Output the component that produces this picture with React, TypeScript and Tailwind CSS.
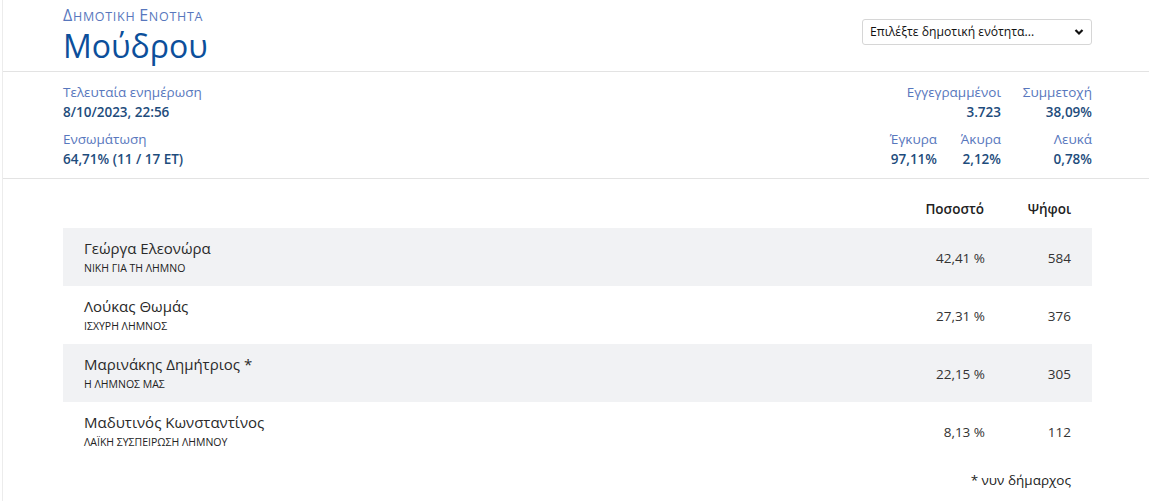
import React from "react";

const rows = [
  { name: "Γεώργα Ελεονώρα", party: "ΝΙΚΗ ΓΙΑ ΤΗ ΛΗΜΝΟ", pct: "42,41 %", votes: "584", shaded: true },
  { name: "Λούκας Θωμάς", party: "ΙΣΧΥΡΗ ΛΗΜΝΟΣ", pct: "27,31 %", votes: "376", shaded: false },
  { name: "Μαρινάκης Δημήτριος *", party: "Η ΛΗΜΝΟΣ ΜΑΣ", pct: "22,15 %", votes: "305", shaded: true },
  { name: "Μαδυτινός Κωνσταντίνος", party: "ΛΑΪΚΗ ΣΥΣΠΕΙΡΩΣΗ ΛΗΜΝΟΥ", pct: "8,13 %", votes: "112", shaded: false },
];

export default function App() {
  return (
    <div
      className="min-h-[501px] bg-white pl-[2px] text-[#333]"
      style={{ fontFamily: '"Open Sans", "Noto Sans", sans-serif' }}
    >
      <div className="min-h-[501px] border-l border-[#ececec]">
        {/* Header */}
        <div className="flex items-start justify-between border-b border-[#e3e3e3] pl-[60px] pr-[57px] pt-[5px] h-[72px]">
          <div>
            <div className="text-[#5877bd] font-medium leading-[20px] tracking-[0.7px]">
              <span className="text-[16px]">Δ</span>
              <span className="text-[12.5px]">ΗΜΟΤΙΚΗ </span>
              <span className="text-[16px]">Ε</span>
              <span className="text-[12.5px]">ΝΟΤΗΤΑ</span>
            </div>
            <div className="text-[32px] leading-[36px] text-[#0c4f9b] mt-[1px]">Μούδρου</div>
          </div>
          <div className="mt-[14px] flex h-[26px] w-[230px] items-center justify-between rounded-[3px] border border-[#d6d6d6] bg-white pl-[7px] pr-[7px] text-[12.2px] text-[#111]">
            <span>Επιλέξτε δημοτική ενότητα...</span>
            <svg width="10" height="8" viewBox="0 0 10 8">
              <path d="M1.5 2 L5 5.5 L8.5 2" fill="none" stroke="#111" strokeWidth="2.2" />
            </svg>
          </div>
        </div>

        {/* Stats */}
        <div className="flex justify-between border-b border-[#e3e3e3] pl-[60px] pr-[57px] pt-[10px] h-[107px] text-[13.5px] leading-[20px]">
          <div>
            <div className="text-[#5877bd]">Τελευταία ενημέρωση</div>
            <div className="font-semibold text-[#1e4c7c]">8/10/2023, 22:56</div>
            <div className="mt-[7px] text-[#5877bd]">Ενσωμάτωση</div>
            <div className="font-semibold text-[#1e4c7c]">64,71% (11 / 17 ΕΤ)</div>
          </div>
          <div>
            <div className="flex justify-end">
              <div className="w-[130px] text-right">
                <div className="text-[#5877bd]">Εγγεγραμμένοι</div>
                <div className="font-semibold text-[#1e4c7c]">3.723</div>
              </div>
              <div className="w-[91px] text-right">
                <div className="text-[#5877bd]">Συμμετοχή</div>
                <div className="font-semibold text-[#1e4c7c]">38,09%</div>
              </div>
            </div>
            <div className="mt-[7px] flex justify-end">
              <div className="w-[80px] text-right">
                <div className="text-[#5877bd]">Έγκυρα</div>
                <div className="font-semibold text-[#1e4c7c]">97,11%</div>
              </div>
              <div className="w-[64px] text-right">
                <div className="text-[#5877bd]">Άκυρα</div>
                <div className="font-semibold text-[#1e4c7c]">2,12%</div>
              </div>
              <div className="w-[91px] text-right">
                <div className="text-[#5877bd]">Λευκά</div>
                <div className="font-semibold text-[#1e4c7c]">0,78%</div>
              </div>
            </div>
          </div>
        </div>

        {/* Table */}
        <div className="pl-[60px] pr-[57px] pt-[20px]">
          <div className="flex h-[29px] items-start text-[13.5px] font-semibold text-[#222]">
            <div className="flex-1" />
            <div className="w-[120px] pr-[1px] text-right">Ποσοστό</div>
            <div className="w-[86px] text-right">Ψήφοι</div>
            <div className="w-[21px]" />
          </div>
          {rows.map((r) => (
            <div
              key={r.name}
              className={`flex h-[58px] items-center ${r.shaded ? "bg-[#f1f2f4]" : "bg-white"}`}
            >
              <div className="flex-1 pl-[21px] -mt-[1px]">
                <div className="text-[15px] leading-[20px] text-[#2a2a2a]">{r.name}</div>
                <div className="text-[10.5px] leading-[16px] text-[#222] mt-[2px]">{r.party}</div>
              </div>
              <div className="w-[120px] text-right text-[13.5px] pt-[2px]">{r.pct}</div>
              <div className="w-[86px] text-right text-[13.5px] pt-[2px]">{r.votes}</div>
              <div className="w-[21px]" />
            </div>
          ))}
          <div className="flex h-[40px] items-center justify-end pr-[21px] text-[13.5px] text-[#222]">
            * νυν δήμαρχος
          </div>
        </div>
      </div>
    </div>
  );
}
